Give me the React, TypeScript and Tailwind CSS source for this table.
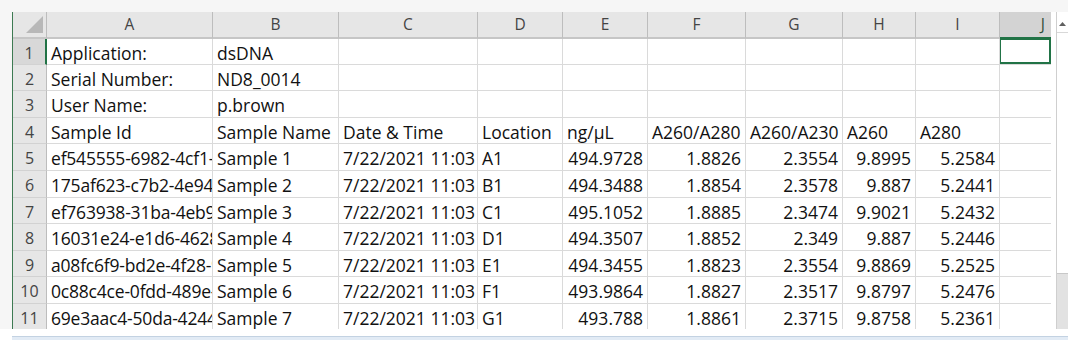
import React from 'react'

const COLS = ['A', 'B', 'C', 'D', 'E', 'F', 'G', 'H', 'I', 'J']

// row heights: the sheet is zoomed, rows land on ~26.6px steps
const ROW_H = [
  'h-[26px]', 'h-[26px]', 'h-[27px]', 'h-[26px]', 'h-[27px]', 'h-[27px]',
  'h-[26px]', 'h-[27px]', 'h-[26px]', 'h-[27px]', 'h-[27px]',
]

type Cell = { v: string; right?: boolean; tight?: boolean }

const t = (v: string): Cell => ({ v })
const n = (v: string): Cell => ({ v, right: true })

const samples: Array<[string, string, string, string, string, string, string, string]> = [
  ['ef545555-6982-4cf1-9d3a-2b7e1c5a0f41', 'Sample 1', 'A1', '494.9728', '1.8826', '2.3554', '9.8995', '5.2584'],
  ['175af623-c7b2-4e94-8a1f-6d02b9e37c15', 'Sample 2', 'B1', '494.3488', '1.8854', '2.3578', '9.887', '5.2441'],
  ['ef763938-31ba-4eb9-a2c4-91f0d83e6b27', 'Sample 3', 'C1', '495.1052', '1.8885', '2.3474', '9.9021', '5.2432'],
  ['16031e24-e1d6-4628-b7e0-3c5a91d4f802', 'Sample 4', 'D1', '494.3507', '1.8852', '2.349', '9.887', '5.2446'],
  ['a08fc6f9-bd2e-4f28-9e61-0a7c4b2d85f3', 'Sample 5', 'E1', '494.3455', '1.8823', '2.3554', '9.8869', '5.2525'],
  ['0c88c4ce-0fdd-489e-b1a5-7e2f6c90d314', 'Sample 6', 'F1', '493.9864', '1.8827', '2.3517', '9.8797', '5.2476'],
  ['69e3aac4-50da-4244-8c3b-d5e17a0f9b62', 'Sample 7', 'G1', '493.788', '1.8861', '2.3715', '9.8758', '5.2361'],
]

const ROWS: Cell[][] = [
  [t('Application:'), t('dsDNA')],
  [t('Serial Number:'), t('ND8_0014')],
  [t('User Name:'), t('p.brown')],
  [
    t('Sample Id'), t('Sample Name'), t('Date & Time'), t('Location'), t('ng/µL'),
    t('A260/A280'), t('A260/A230'), t('A260'), t('A280'),
  ],
  ...samples.map(([id, name, loc, ng, r1, r2, a260, a280]) => [
    { v: id, tight: true }, t(name), n('7/22/2021 11:03'), t(loc), n(ng), n(r1), n(r2), n(a260), n(a280),
  ]),
]

function CornerCell() {
  return (
    <div className="flex h-[27px] items-end justify-end border-r border-b-2 border-r-[#bdbdbd] border-b-[#c6c6c6] bg-[#e6e6e6] pr-[3px] pb-[4px]">
      <svg width="17" height="17" viewBox="0 0 17 17">
        <polygon points="17,0 17,17 0,17" fill="#b8b8b8" />
      </svg>
    </div>
  )
}

export default function App() {
  return (
    <div className="flex h-[340px] w-[1068px] flex-col overflow-hidden bg-white font-['Open_Sans',sans-serif] text-[17.5px] text-[#111]">
      {/* window chrome above the sheet */}
      <div className="h-[12px] shrink-0 bg-[#f6f6f6]" />

      <div className="flex h-[317px] shrink-0">
        <div className="w-[12px] bg-[#f6f6f6]" />
        <div className="w-px bg-[#3d7a52]" />

        {/* sheet */}
        <div className="grid h-[317px] grid-cols-[34px_166px_126px_139px_85px_85px_98px_97px_73px_84px_51px] content-start overflow-hidden">
          <CornerCell />
          {COLS.map((c) =>
            c === 'J' ? (
              <div
                key={c}
                className="h-[27px] border-b-2 border-b-[#217346] bg-[#d3d3d3] pr-[6px] text-right text-[15.5px] leading-[25px] text-[#2f4f3a]"
              >
                {c}
              </div>
            ) : (
              <div
                key={c}
                className="h-[27px] border-r border-b-2 border-r-[#bdbdbd] border-b-[#c6c6c6] bg-[#e6e6e6] text-center text-[15.5px] leading-[25px] text-[#444]"
              >
                {c}
              </div>
            )
          )}

          {ROWS.map((row, r) => (
            <React.Fragment key={r}>
              <div
                className={`${ROW_H[r]} border-b border-b-[#d2d2d2] text-center text-[16px] leading-[29px] text-[#444] ${
                  r === 0
                    ? 'border-r-2 border-r-[#217346] bg-[#d8d8d8]'
                    : 'border-r border-r-[#bdbdbd] bg-[#e6e6e6]'
                }`}
              >
                {r + 1}
              </div>
              {COLS.map((c, ci) => {
                const cell = row[ci]
                return (
                  <div
                    key={c}
                    className={`relative ${ROW_H[r]} overflow-hidden whitespace-nowrap border-b border-b-[#dadada] px-[4px] leading-[29px] ${
                      c === 'J' ? '' : 'border-r border-r-[#dadada]'
                    } ${cell?.right ? 'text-right' : 'text-left'} ${cell?.tight ? 'pr-0 tracking-[-0.2px]' : ''}`}
                  >
                    {cell?.v}
                    {r === 0 && c === 'J' && (
                      <div className="absolute inset-0 -top-[1px] -left-[1px] border-2 border-[#217346]" />
                    )}
                  </div>
                )
              })}
            </React.Fragment>
          ))}
        </div>

        <div className="w-[5px] bg-white" />

        {/* vertical scrollbar */}
        <div className="flex w-[12px] flex-col border-l border-[#cfcfcf] bg-[#e2e2e2]">
          <div className="flex h-[21px] items-center justify-center border-b border-[#d8d8d8] bg-white pt-[3px]">
            <svg width="7" height="4" viewBox="0 0 7 4">
              <polygon points="0,4 3.5,0 7,4" fill="#606060" />
            </svg>
          </div>
          <div className="h-[241px] border-b border-[#c8c8c8] bg-white" />
        </div>
      </div>

      <div className="h-[7px] shrink-0 bg-white" />
      <div className="flex h-[4px] shrink-0">
        <div className="w-[12px] bg-white" />
        <div className="flex-1 border-t border-[#c3d2e2] bg-[#e2ebf5]" />
      </div>
    </div>
  )
}
